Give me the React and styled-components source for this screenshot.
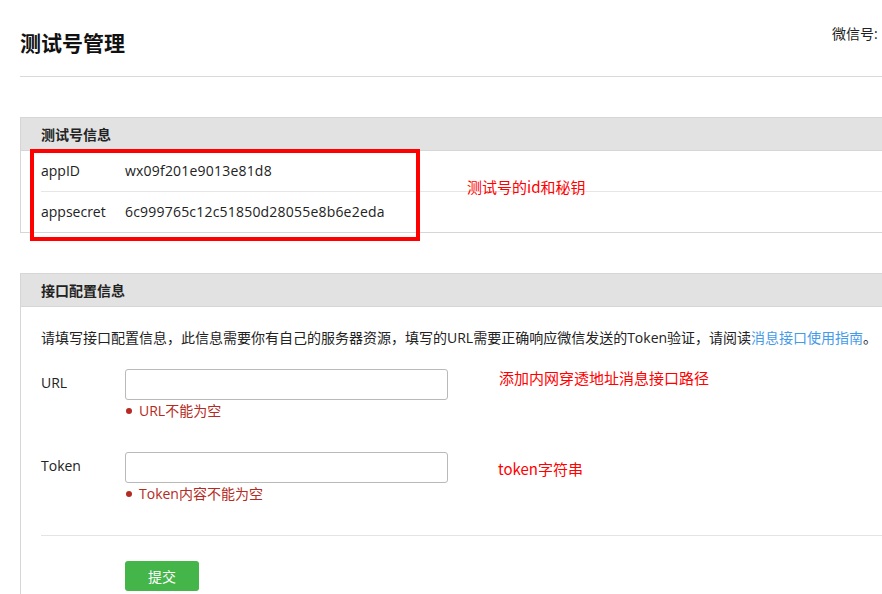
import React from "react";
import styled, { createGlobalStyle } from "styled-components";

const Global = createGlobalStyle`
  html, body { margin: 0; padding: 0; background: #fff; overflow: hidden; }
  body {
    font-family: "Open Sans", "Noto Sans CJK SC", sans-serif;
    color: #222;
    font-size: 14px;
  }
  * { box-sizing: border-box; }
`;

const Page = styled.div`
  width: 982px;
  padding-left: 20px;
`;

const Header = styled.header`
  display: flex;
  justify-content: space-between;
  align-items: flex-start;
  padding-bottom: 20px;
  border-bottom: 1px solid #d9d9d9;
`;

const Title = styled.h1`
  margin: 0;
  padding-top: 28px;
  font-size: 21px;
  line-height: 28px;
  font-weight: 700;
  color: #111;
  font-family: "Noto Sans CJK SC", sans-serif;
`;

const Account = styled.div`
  width: 150px;
  padding-top: 24px;
  line-height: 20px;
  font-size: 14px;
  color: #222;
`;

const Panel = styled.section`
  position: relative;
  margin-top: 40px;
  border: 1px solid #d6d6d6;
  border-right: none;
  ${(p) => p.$open && "border-bottom: none;"}
`;

const PanelHead = styled.div`
  height: 33px;
  line-height: 32px;
  padding-left: 20px;
  background: #e2e2e2;
  border-bottom: 1px solid #d6d6d6;
  font-weight: 700;
  font-size: 14px;
  color: #222;
  font-family: "Noto Sans CJK SC", sans-serif;
`;

const InfoRow = styled.div`
  display: flex;
  margin-left: 20px;
  height: ${(p) => (p.$first ? 40 : 41)}px;
  line-height: 40px;
  border-top: ${(p) => (p.$first ? "none" : "1px solid #e6e6e6")};
`;

const Label = styled.div`
  width: 84px;
  flex: none;
`;

const Value = styled.div`
  color: #222;
  letter-spacing: 0.2px;
`;

const Body = styled.div`
  padding: 0 0 20px 20px;
`;

const Desc = styled.p`
  margin: 21px 0 0;
  line-height: 20px;
  white-space: nowrap;
`;

const Link = styled.a`
  color: #459ae9;
  text-decoration: none;
`;

const Form = styled.div`
  margin-top: 21px;
`;

const Field = styled.div`
  position: relative;
  display: flex;
  margin-top: ${(p) => (p.$first ? 0 : 31)}px;
`;

const FieldLabel = styled.div`
  width: 84px;
  flex: none;
  padding-top: 4px;
  line-height: 20px;
`;

const FieldBody = styled.div`
  display: flex;
  flex-direction: column;
`;

const Input = styled.input`
  width: 323px;
  height: 31px;
  border: 1px solid #b9b9b9;
  border-radius: 3px;
  padding: 0 8px;
  font: inherit;
  outline: none;
`;

const Error = styled.div`
  display: flex;
  align-items: center;
  margin-top: 1px;
  line-height: 20px;
  color: #b52a22;
  font-size: 14px;
`;

const Dot = styled.span`
  width: 6px;
  height: 6px;
  border-radius: 50%;
  background: #b52a22;
  margin: 0 7px 0 1px;
`;

const Divider = styled.div`
  margin-top: 31px;
  border-top: 1px solid #e4e4e4;
`;

const Actions = styled.div`
  padding: 25px 0 0 84px;
`;

const Button = styled.button`
  width: 74px;
  height: 30px;
  border: none;
  border-radius: 3px;
  background: #44b549;
  color: #fff;
  font-size: 14px;
  font-family: "Noto Sans CJK SC", sans-serif;
  cursor: pointer;
`;

const MarkBox = styled.div`
  position: absolute;
  left: 9px;
  top: 31px;
  width: 390px;
  height: 92px;
  border: 4px solid #ff0000;
  pointer-events: none;
`;

const Note = styled.div`
  position: absolute;
  left: ${(p) => p.$x}px;
  top: ${(p) => p.$y}px;
  color: #ff0000;
  font-size: 15px;
  line-height: 20px;
  white-space: nowrap;
  font-family: "Noto Sans CJK SC", sans-serif;
`;

export default function App() {
  return (
    <>
      <Global />
      <Page>
        <Header>
          <Title>测试号管理</Title>
          <Account>微信号:</Account>
        </Header>

        <Panel>
          <PanelHead>测试号信息</PanelHead>
          <InfoRow $first>
            <Label>appID</Label>
            <Value>wx09f201e9013e81d8</Value>
          </InfoRow>
          <InfoRow>
            <Label>appsecret</Label>
            <Value>6c999765c12c51850d28055e8b6e2eda</Value>
          </InfoRow>
          <MarkBox />
          <Note $x={446} $y={59}>测试号的id和秘钥</Note>
        </Panel>

        <Panel $open>
          <PanelHead>接口配置信息</PanelHead>
          <Body>
            <Desc>
              请填写接口配置信息，此信息需要你有自己的服务器资源，填写的URL需要正确响应微信发送的Token验证，请阅读
              <Link href="#">消息接口使用指南</Link>。
            </Desc>
            <Form>
              <Field $first>
                <FieldLabel>URL</FieldLabel>
                <FieldBody>
                  <Input type="text" />
                  <Error>
                    <Dot />
                    URL不能为空
                  </Error>
                </FieldBody>
                <Note $x={458} $y={-1}>添加内网穿透地址消息接口路径</Note>
              </Field>
              <Field>
                <FieldLabel>Token</FieldLabel>
                <FieldBody>
                  <Input type="text" />
                  <Error>
                    <Dot />
                    Token内容不能为空
                  </Error>
                </FieldBody>
                <Note $x={457} $y={7}>token字符串</Note>
              </Field>
            </Form>
            <Divider />
            <Actions>
              <Button>提交</Button>
            </Actions>
          </Body>
        </Panel>
      </Page>
    </>
  );
}
